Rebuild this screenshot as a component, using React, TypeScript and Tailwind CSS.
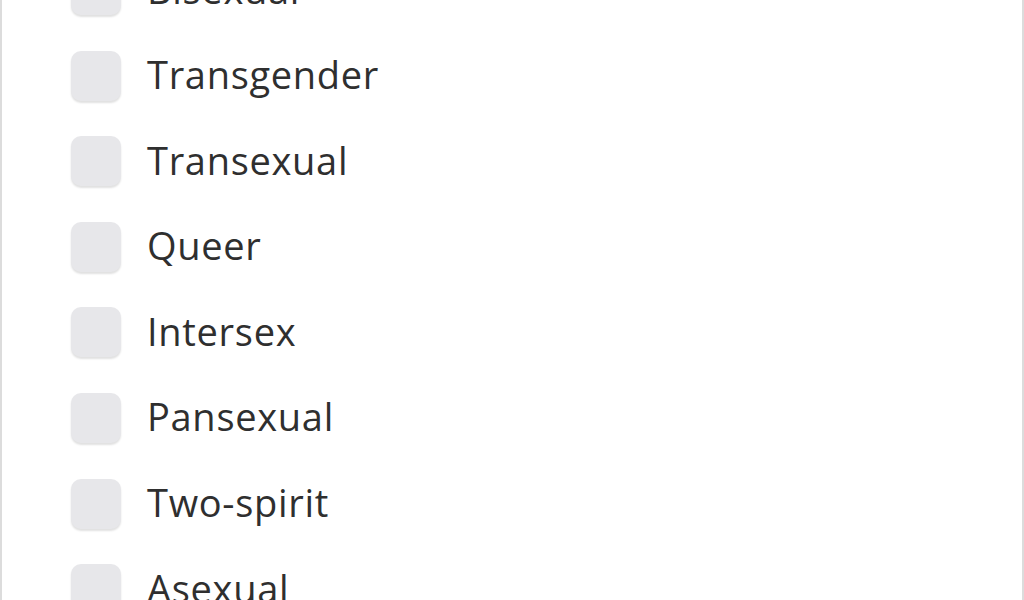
import React from "react";

const OPTIONS = [
  "Bisexual",
  "Transgender",
  "Transexual",
  "Queer",
  "Intersex",
  "Pansexual",
  "Two-spirit",
  "Asexual",
];

function Option({ label }: { label: string }) {
  return (
    <label className="flex items-center h-[50px] cursor-pointer">
      {/* checkbox box */}
      <span className="w-[50px] h-[50px] shrink-0 rounded-[10px] bg-[#e7e7ea] shadow-[0_2px_2px_rgba(0,0,0,0.12)]" />
      <span className="ml-[26px] text-[38px] leading-none text-[#2f2f2f] tracking-[0.7px] -mt-[3px]">
        {label}
      </span>
    </label>
  );
}

export default function App() {
  return (
    <div
      className="w-[1024px] h-[600px] overflow-hidden bg-white border-l-2 border-r-2 border-[#dcdcdc]"
      style={{ fontFamily: "'Open Sans', Lato, sans-serif" }}
    >
      <div className="flex flex-col gap-[35.6px] pl-[69px] mt-[-35px]">
        {OPTIONS.map((o) => (
          <Option key={o} label={o} />
        ))}
      </div>
    </div>
  );
}
